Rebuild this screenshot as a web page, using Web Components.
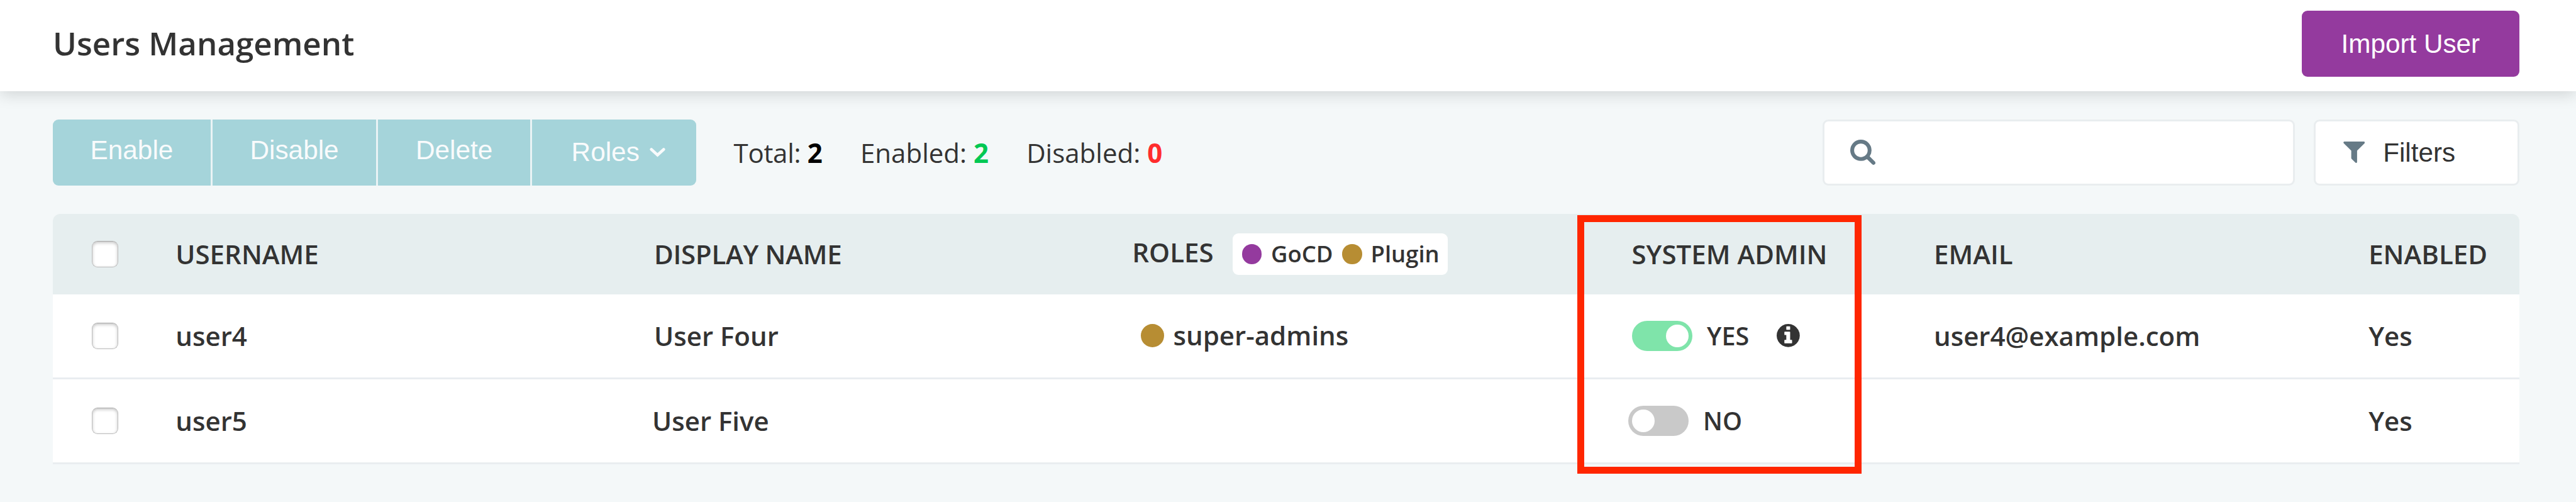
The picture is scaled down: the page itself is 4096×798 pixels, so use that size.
<!DOCTYPE html>
<html lang="en">
<head>
<meta charset="utf-8">
<title>Users Management</title>
<style>
html,body{margin:0;padding:0}
body{width:4096px;height:798px;overflow:hidden;background:#f4f8f9;color:#333;font:400 42px "Open Sans","Noto Sans",sans-serif}
</style>
</head>
<body>
<users-page></users-page>
<script>
const define = (name, html, setup) => {
  const template = document.createElement('template');
  template.innerHTML = html;
  customElements.define(name, class extends HTMLElement {
    constructor() {
      super();
      this.attachShadow({ mode: 'open' }).append(template.content.cloneNode(true));
    }
    connectedCallback() { if (setup) setup(this, this.shadowRoot); }
  });
};

const ICONS = {
  search: ['64 128 1664 1664', 'M1216 832q0-185-131.5-316.5t-316.5-131.5-316.5 131.5-131.5 316.5 131.5 316.5 316.5 131.5 316.5-131.5 131.5-316.5zm512 832q0 52-38 90t-90 38q-54 0-90-38l-343-342q-179 124-399 124-143 0-273.5-55.5t-225-150-150-225-55.5-273.5 55.5-273.5 150-225 225-150 273.5-55.5 273.5 55.5 225 150 150 225 55.5 273.5q0 220-124 399l343 343q37 37 37 90z'],
  filter: ['191 256 1410 1408', 'M1595 295q17 41-14 70l-493 493v742q0 42-39 59-13 5-25 5-27 0-45-19l-256-256q-19-19-19-45v-486l-493-493q-31-29-14-70 17-39 59-39h1280q42 0 59 39z'],
  info: ['128 128 1536 1536', 'M1152 1376v-160q0-14-9-23t-23-9h-96v-512q0-14-9-23t-23-9h-320q-14 0-23 9t-9 23v160q0 14 9 23t23 9h96v320h-96q-14 0-23 9t-9 23v160q0 14 9 23t23 9h448q14 0 23-9t9-23zm-128-896v-160q0-14-9-23t-23-9h-192q-14 0-23 9t-9 23v160q0 14 9 23t23 9h192q14 0 23-9t9-23zm640 416q0 209-103 385.5t-279.5 279.5-385.5 103-385.5-103-279.5-279.5-103-385.5 103-385.5 279.5-279.5 385.5-103 385.5 103 279.5 279.5 103 385.5z']
};

define('ui-icon', `
<style>:host{display:block;flex:none;color:#667a86}svg{display:block;width:100%;height:100%;fill:currentColor}</style>
<svg><path/></svg>`, (el, root) => {
  const [box, d] = ICONS[el.getAttribute('name')];
  root.querySelector('svg').setAttribute('viewBox', box);
  root.querySelector('path').setAttribute('d', d);
});

define('page-header', `
<style>
:host{display:flex;position:relative;z-index:1;box-sizing:border-box;height:144.75px;padding:17.25px 90px 0 84px;justify-content:space-between;align-items:flex-start;background:#fff;box-shadow:0 6px 24px rgba(0,0,0,.15)}
h1{margin:-1px 0 0;font-size:51px;font-weight:600;line-height:105px}
</style>
<h1><slot></slot></h1><slot name="action"></slot>`);

define('primary-button', `
<style>
:host{display:block}
button{display:block;border:0;width:345.75px;height:105px;padding:0;border-radius:9px;background:#943a9e;color:#fff;font:42.2px/105px "Liberation Sans",Arial,sans-serif}
</style>
<button><slot></slot></button>`);

define('bulk-actions', `
<style>
:host{display:flex;gap:3px;height:105px;border-radius:9px;overflow:hidden;background:#eaf3f5;font-family:"Liberation Sans",Arial,sans-serif;font-size:42.3px;color:#f9fbfc}
div{box-sizing:border-box;background:#a5d4da;text-align:center;line-height:98px}
.roles{display:flex;align-items:center;padding-left:62.5px;line-height:104px}
svg{width:25px;height:15px;margin-left:16px;fill:none;stroke:currentColor;stroke-width:4.6;stroke-linecap:round}
</style>
<div style="width:250.5px">Enable</div><div style="width:260.25px">Disable</div><div style="width:241.5px">Delete</div>
<div class="roles" style="width:260.25px"><span>Roles</span><svg viewBox="0 0 25 15"><path d="M2.7 2.5 12.5 11.4 22.3 2.5"/></svg></div>`);

define('user-counts', `
<style>
:host{display:flex;gap:60px;margin-left:60px;line-height:57px;white-space:pre}
b{font-weight:700;color:#000}
.on{color:#00c853}.off{color:#ff2d2d}
.total{letter-spacing:-.3px}
</style>
<span><span class="total">Total: </span><b>2</b></span><span>Enabled: <b class="on">2</b></span><span>Disabled: <b class="off">0</b></span>`);

define('search-field', `
<style>
:host{display:flex;align-items:center;box-sizing:border-box;width:750px;height:105px;padding-left:41.5px;margin-left:auto;border:3px solid #e9edef;border-radius:9px;background:#fff}
ui-icon{width:40px;height:40px}
</style>
<ui-icon name="search"></ui-icon>`);

define('filter-button', `
<style>
:host{display:flex;align-items:center;box-sizing:border-box;width:327px;height:105px;padding-left:44px;margin-left:30px;border:3px solid #e9edef;border-radius:9px;background:#fff;font:42.2px/99px "Liberation Sans",Arial,sans-serif}
ui-icon{width:34.5px;height:34px;margin-right:29px}
</style>
<ui-icon name="filter"></ui-icon><slot></slot>`);

define('tool-bar', `
<style>:host{display:flex;align-items:center;height:105px;padding:45px 90px 45px 84px}</style>
<slot></slot>`);

define('check-box', `
<style>:host{display:block;box-sizing:border-box;width:42px;height:42px;margin-left:61.5px;border:1.5px solid #bcbcbc;border-top-color:#a9a9a9;border-radius:9px;background:#fff;box-shadow:inset 0 2px 5px rgba(0,0,0,.24)}</style>`);

define('role-dot', `
<style>:host{display:block;flex:none;width:31.5px;height:31.5px;border-radius:50%;background:#b78d33}:host([kind=gocd]){background:#943a9e}</style>`);

define('role-legend', `
<style>
:host{display:flex;align-items:center;box-sizing:border-box;width:342px;height:66px;margin-left:30.5px;padding-left:14.5px;border-radius:9px;background:#fff;font-size:36.4px;line-height:50px}
span{margin:-2px 14.5px 0 15px}
</style>
<role-dot kind="gocd"></role-dot><span>GoCD</span><role-dot></role-dot><span style="margin:-2px 0 0 14px">Plugin</span>`);

define('toggle-switch', `
<style>
:host{display:flex;align-items:center;font-size:39.5px}
i{box-sizing:border-box;width:96px;height:48px;padding:6px;border-radius:24px;background:#c9c9c9;margin-right:23.5px}
i::before{content:"";display:block;width:36px;height:36px;border-radius:50%;background:#fff}
:host([on]) i{background:#7fe4aa}
:host([on]) i::before{margin-left:48.75px}
</style>
<i></i><slot></slot>`);

define('table-row', `
<style>
:host{display:grid;grid-template-columns:195px 760px 759.5px 793.5px 480px 690.5px 1fr;align-items:center;box-sizing:border-box;height:135px;border-bottom:3px solid #e9edf0;background:#fff;font-weight:600;line-height:58px}
:host([head]){height:127.5px;border:0;border-radius:12px 12px 0 0;background:#e6eeef}
::slotted(div){display:flex;align-items:center}
</style>
<slot></slot>`);

define('users-table', `
<style>:host{display:block;width:3918px;margin-left:84px}</style>
<slot></slot>`);

define('highlight-frame', `
<style>:host{display:block;position:absolute;box-sizing:border-box;left:2505.75px;top:341.25px;width:451.5px;height:411px;border:11.25px solid #ff2600}</style>`);

define('users-page', `
<style>
:host{display:block;position:relative;width:4092px;height:797.25px;zoom:1.000978}
.info{width:36.75px;height:36.75px;margin-left:44px;color:#333}
</style>
<page-header>Users Management<primary-button slot="action">Import User</primary-button></page-header>
<tool-bar>
  <bulk-actions></bulk-actions>
  <user-counts></user-counts>
  <search-field></search-field>
  <filter-button>Filters</filter-button>
</tool-bar>
<users-table>
  <table-row head>
    <check-box></check-box><div>USERNAME</div><div style="letter-spacing:-.3px">DISPLAY NAME</div>
    <div><span style="margin-top:-5px">ROLES</span><role-legend></role-legend></div>
    <div>SYSTEM ADMIN</div><div>EMAIL</div><div>ENABLED</div>
  </table-row>
  <table-row>
    <check-box></check-box><div>user4</div><div>User Four</div>
    <div><role-dot style="width:36.75px;height:36.75px;margin:0 14.5px 0 14px"></role-dot><span style="margin-top:-2px">super-admins</span></div>
    <div><toggle-switch on>YES</toggle-switch><ui-icon class="info" name="info"></ui-icon></div>
    <div>user4@example.com</div><div>Yes</div>
  </table-row>
  <table-row>
    <check-box></check-box><div>user5</div><div style="margin-left:-3px">User Five</div>
    <div></div>
    <div><toggle-switch style="margin-left:-6px">NO</toggle-switch></div>
    <div></div><div>Yes</div>
  </table-row>
</users-table>
<highlight-frame></highlight-frame>`);
</script>
</body>
</html>
